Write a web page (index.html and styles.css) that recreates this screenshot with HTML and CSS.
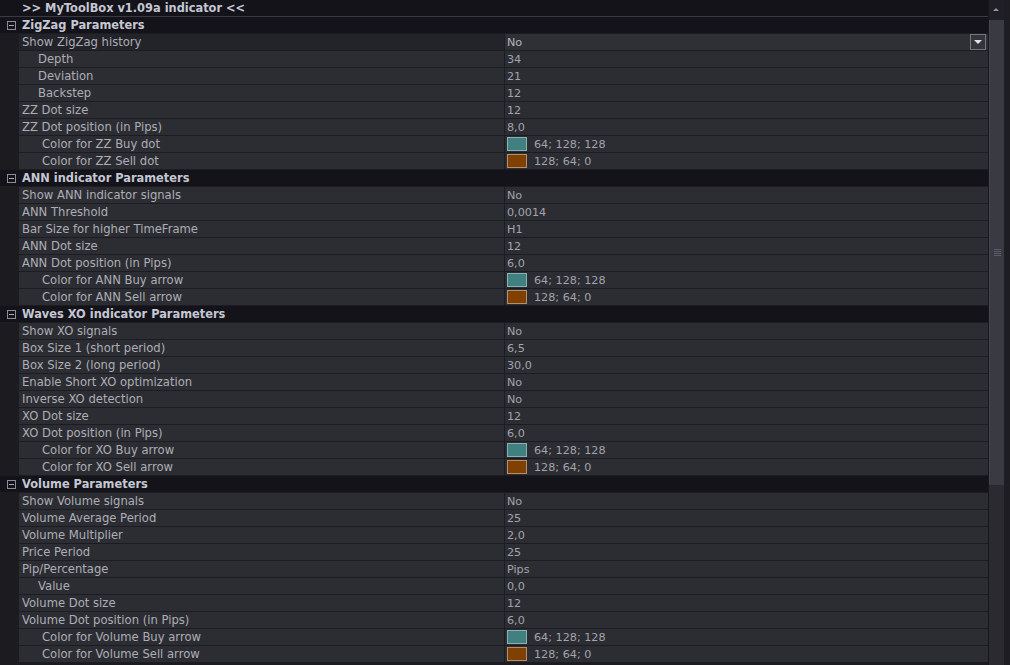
FILE: index.html
```html
<!DOCTYPE html>
<html lang="en">
<head>
  <meta charset="UTF-8">
  <title>MyToolBox v1.09a indicator</title>
  <link rel="stylesheet" href="styles.css">
</head>
<body>
  <div class="window">
    <div class="grid">
      <div class="title">&gt;&gt; MyToolBox v1.09a indicator &lt;&lt;</div>

      <div class="section"><span class="toggle"></span>ZigZag Parameters</div>
      <div class="row selected"><span class="name">Show ZigZag history</span><span class="value edit">No<span class="drop"></span></span></div>
      <div class="row"><span class="name sub">Depth</span><span class="value">34</span></div>
      <div class="row"><span class="name sub">Deviation</span><span class="value">21</span></div>
      <div class="row"><span class="name sub">Backstep</span><span class="value">12</span></div>
      <div class="row"><span class="name">ZZ Dot size</span><span class="value">12</span></div>
      <div class="row"><span class="name">ZZ Dot position (in Pips)</span><span class="value">8,0</span></div>
      <div class="row"><span class="name sub2">Color for ZZ Buy dot</span><span class="value"><i class="swatch teal"></i>64; 128; 128</span></div>
      <div class="row"><span class="name sub2">Color for ZZ Sell dot</span><span class="value"><i class="swatch brown"></i>128; 64; 0</span></div>

      <div class="section"><span class="toggle"></span>ANN indicator Parameters</div>
      <div class="row"><span class="name">Show ANN indicator signals</span><span class="value">No</span></div>
      <div class="row"><span class="name">ANN Threshold</span><span class="value">0,0014</span></div>
      <div class="row"><span class="name">Bar Size for higher TimeFrame</span><span class="value">H1</span></div>
      <div class="row"><span class="name">ANN Dot size</span><span class="value">12</span></div>
      <div class="row"><span class="name">ANN Dot position (in Pips)</span><span class="value">6,0</span></div>
      <div class="row"><span class="name sub2">Color for ANN Buy arrow</span><span class="value"><i class="swatch teal"></i>64; 128; 128</span></div>
      <div class="row"><span class="name sub2">Color for ANN Sell arrow</span><span class="value"><i class="swatch brown"></i>128; 64; 0</span></div>

      <div class="section"><span class="toggle"></span>Waves XO indicator Parameters</div>
      <div class="row"><span class="name">Show XO signals</span><span class="value">No</span></div>
      <div class="row"><span class="name">Box Size 1 (short period)</span><span class="value">6,5</span></div>
      <div class="row"><span class="name">Box Size 2 (long period)</span><span class="value">30,0</span></div>
      <div class="row"><span class="name">Enable Short XO optimization</span><span class="value">No</span></div>
      <div class="row"><span class="name">Inverse XO detection</span><span class="value">No</span></div>
      <div class="row"><span class="name">XO Dot size</span><span class="value">12</span></div>
      <div class="row"><span class="name">XO Dot position (in Pips)</span><span class="value">6,0</span></div>
      <div class="row"><span class="name sub2">Color for XO Buy arrow</span><span class="value"><i class="swatch teal"></i>64; 128; 128</span></div>
      <div class="row"><span class="name sub2">Color for XO Sell arrow</span><span class="value"><i class="swatch brown"></i>128; 64; 0</span></div>

      <div class="section"><span class="toggle"></span>Volume Parameters</div>
      <div class="row"><span class="name">Show Volume signals</span><span class="value">No</span></div>
      <div class="row"><span class="name">Volume Average Period</span><span class="value">25</span></div>
      <div class="row"><span class="name">Volume Multiplier</span><span class="value">2,0</span></div>
      <div class="row"><span class="name">Price Period</span><span class="value">25</span></div>
      <div class="row"><span class="name">Pip/Percentage</span><span class="value">Pips</span></div>
      <div class="row"><span class="name sub">Value</span><span class="value">0,0</span></div>
      <div class="row"><span class="name">Volume Dot size</span><span class="value">12</span></div>
      <div class="row"><span class="name">Volume Dot position (in Pips)</span><span class="value">6,0</span></div>
      <div class="row"><span class="name sub2">Color for Volume Buy arrow</span><span class="value"><i class="swatch teal"></i>64; 128; 128</span></div>
      <div class="row"><span class="name sub2">Color for Volume Sell arrow</span><span class="value"><i class="swatch brown"></i>128; 64; 0</span></div>
    </div>

    <div class="scrollbar">
      <div class="arrow up"></div>
      <div class="thumb"><span class="grip"></span></div>
      <div class="track"></div>
    </div>
  </div>
</body>
</html>
```

FILE: styles.css
```css
body {
  margin: 0;
  background-color: #1a1a1f;
  font-family: "DejaVu Sans", Verdana, sans-serif;
  font-size: 11.6px;
}
.window {
  display: flex;
  width: 1010px;
  height: 665px;
  overflow: hidden;
  background-color: #1b1b20;
}
.grid {
  width: 988px;
  display: flex;
  flex-direction: column;
}
.title {
  flex: none;
  height: 16px;
  line-height: 16px;
  border-bottom: 1px solid #3a3a45;
  padding-left: 22px;
  background-color: #141319;
  color: #c4c7d4;
  font-weight: bold;
  font-size: 11.4px;
}
.section {
  flex: none;
  height: 16px;
  line-height: 17px;
  border-bottom: 1px solid #1c1c22;
  background-color: #141319;
  color: #c4c7d4;
  font-weight: bold;
  font-size: 11.4px;
  display: flex;
  align-items: center;
}
.toggle {
  width: 7px;
  height: 7px;
  border: 1px solid #8a8c96;
  margin: 0 6px 0 7px;
  position: relative;
}
.toggle::after {
  content: "";
  position: absolute;
  left: 1px;
  top: 3px;
  width: 5px;
  height: 1px;
  background-color: #a8aab4;
}
.row {
  flex: none;
  height: 17px;
  display: flex;
  padding-left: 19px;
}
.name {
  width: 482px;
  height: 16px;
  line-height: 17px;
  padding-left: 3px;
  border-bottom: 1px solid #1c1c22;
  border-right: 1px solid #1c1c22;
  background-color: #2c2d33;
  color: #acadb5;
  white-space: nowrap;
}
.name.sub {
  padding-left: 19px;
  width: 466px;
}
.name.sub2 {
  padding-left: 23px;
  width: 462px;
}
.value {
  flex: 1;
  height: 16px;
  padding-left: 2px;
  border-bottom: 1px solid #1c1c22;
  background-color: #2c2d33;
  color: #a2a3ab;
  font-size: 11.2px;
  display: flex;
  align-items: center;
  white-space: nowrap;
}
.selected .name {
  background-color: #23232a;
}
.edit {
  background-color: #2f3036;
  color: #b4b5bc;
  position: relative;
}
.drop {
  position: absolute;
  right: 2px;
  top: 0;
  width: 14px;
  height: 14px;
  border: 1px solid #75767e;
  background-color: #34353b;
}
.drop::after {
  content: "";
  position: absolute;
  left: 3px;
  top: 5px;
  border-left: 4px solid transparent;
  border-right: 4px solid transparent;
  border-top: 4px solid #e2e2e6;
}
.swatch {
  width: 18px;
  height: 12px;
  margin-right: 7px;
  border: 1px solid #9a9aa0;
}
.teal {
  background-color: #408080;
  border-color: #8cb0b0;
}
.brown {
  background-color: #804000;
  border-color: #b09070;
}
.scrollbar {
  width: 15px;
  display: flex;
  flex-direction: column;
  border-left: 1px solid #16161b;
  border-right: 6px solid #1d1d23;
  background-color: #2a2a30;
}
.arrow {
  height: 20px;
  position: relative;
  background-color: #1f1f25;
}
.arrow.up::after {
  content: "";
  position: absolute;
  left: 4px;
  top: 8px;
  border-left: 3px solid transparent;
  border-right: 3px solid transparent;
  border-bottom: 3px solid #8f909a;
}
.thumb {
  height: 465px;
  background-color: #393a42;
  border-left: 1px solid #45464f;
  display: flex;
  align-items: center;
  justify-content: center;
}
.grip {
  width: 7px;
  height: 7px;
  background: repeating-linear-gradient(#5a5b64 0 1px, transparent 1px 2px);
}
.track {
  flex: 1;
  background-color: #2a2a30;
}
```
